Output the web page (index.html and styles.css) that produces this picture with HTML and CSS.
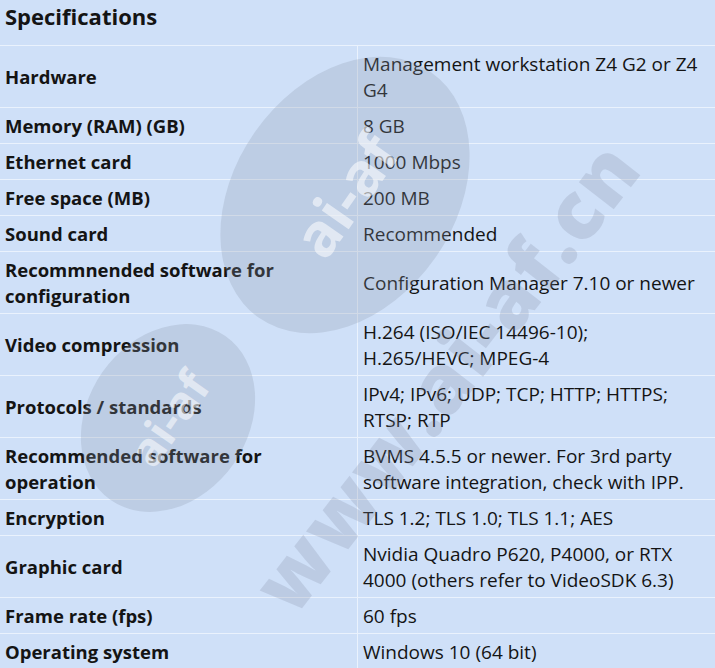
FILE: index.html
```html
<!DOCTYPE html>
<html>
<head>
<meta charset="utf-8">
<link rel="stylesheet" href="styles.css">
</head>
<body>
<div class="page">
  <table class="specs">
    <thead>
      <tr><th colspan="2" class="title">Specifications</th></tr>
    </thead>
    <tbody>
      <tr><td class="k">Hardware</td><td class="v">Management workstation Z4 G2 or Z4 G4</td></tr>
      <tr><td class="k">Memory (RAM) (GB)</td><td class="v">8 GB</td></tr>
      <tr><td class="k">Ethernet card</td><td class="v">1000 Mbps</td></tr>
      <tr><td class="k">Free space (MB)</td><td class="v">200 MB</td></tr>
      <tr><td class="k">Sound card</td><td class="v">Recommended</td></tr>
      <tr><td class="k">Recommnended software for configuration</td><td class="v">Configuration Manager 7.10 or newer</td></tr>
      <tr><td class="k">Video compression</td><td class="v">H.264 (ISO/IEC 14496-10);<br>H.265/HEVC; MPEG-4</td></tr>
      <tr><td class="k">Protocols / standards</td><td class="v">IPv4; IPv6; UDP; TCP; HTTP; HTTPS; RTSP; RTP</td></tr>
      <tr><td class="k">Recommended software for operation</td><td class="v">BVMS 4.5.5 or newer. For 3rd party software integration, check with IPP.</td></tr>
      <tr><td class="k">Encryption</td><td class="v">TLS 1.2; TLS 1.0; TLS 1.1; AES</td></tr>
      <tr><td class="k">Graphic card</td><td class="v">Nvidia Quadro P620, P4000, or RTX 4000 (others refer to VideoSDK 6.3)</td></tr>
      <tr><td class="k">Frame rate (fps)</td><td class="v">60 fps</td></tr>
      <tr><td class="k">Operating system</td><td class="v">Windows 10 (64 bit)</td></tr>
    </tbody>
  </table>
  <div class="wm" aria-hidden="true">
    <div class="blob blob1"><span>ai-af</span></div>
    <div class="blob blob2"><span>ai-af</span></div>
    <div class="wmtext">www.ai-af.cn</div>
  </div>
</div>
</body>
</html>
```
FILE: styles.css
```css
html, body {
  margin: 0;
  padding: 0;
  background: #cfe0f8;
}
.page {
  position: relative;
  width: 715px;
  height: 668px;
  overflow: hidden;
  background: #cfe0f8;
  font-family: "Open Sans", "Noto Sans", sans-serif;
  color: #141414;
}
.specs {
  width: 715px;
  border-collapse: collapse;
  table-layout: fixed;
}
.specs th.title {
  text-align: left;
  font-size: 22px;
  font-weight: 700;
  height: 43px;
  padding: 2px 5px 0;
  vertical-align: top;
  border-bottom: 1px solid #eaf2fd;
  line-height: 28px;
}
.specs td {
  padding: 5px 5px 4px;
  line-height: 26px;
  vertical-align: middle;
  border-bottom: 1px solid #eaf2fd;
}
.specs td.k {
  width: 347px;
  font-size: 18.5px;
  font-weight: 700;
  border-right: 1px solid #eaf2fd;
}
.specs td.v {
  font-size: 19px;
  padding-right: 4px;
}
.wm {
  position: absolute;
  inset: 0;
  pointer-events: none;
}
.blob {
  position: absolute;
  border-radius: 50%;
  background: rgba(140, 150, 170, 0.26);
  display: flex;
  align-items: center;
  justify-content: center;
}
.blob span {
  color: rgba(255, 255, 255, 0.55);
  font-family: "Open Sans", sans-serif;
  font-weight: 700;
  white-space: nowrap;
}
.blob1 {
  left: 235px;
  top: 45px;
  width: 220px;
  height: 300px;
  transform: rotate(35deg);
}
.blob1 span { transform: rotate(-90deg); font-size: 60px; }
.blob2 {
  left: 88px;
  top: 318px;
  width: 160px;
  height: 200px;
  transform: rotate(35deg);
}
.blob2 span { transform: rotate(-90deg); font-size: 46px; }
.wmtext {
  position: absolute;
  left: 445px;
  top: 375px;
  font-family: "Open Sans", sans-serif;
  font-weight: 800;
  font-size: 80px;
  line-height: 1;
  color: rgba(130, 140, 165, 0.24);
  transform: translate(-50%, -50%) rotate(-52deg);
  white-space: nowrap;
  letter-spacing: 2px;
}
```
